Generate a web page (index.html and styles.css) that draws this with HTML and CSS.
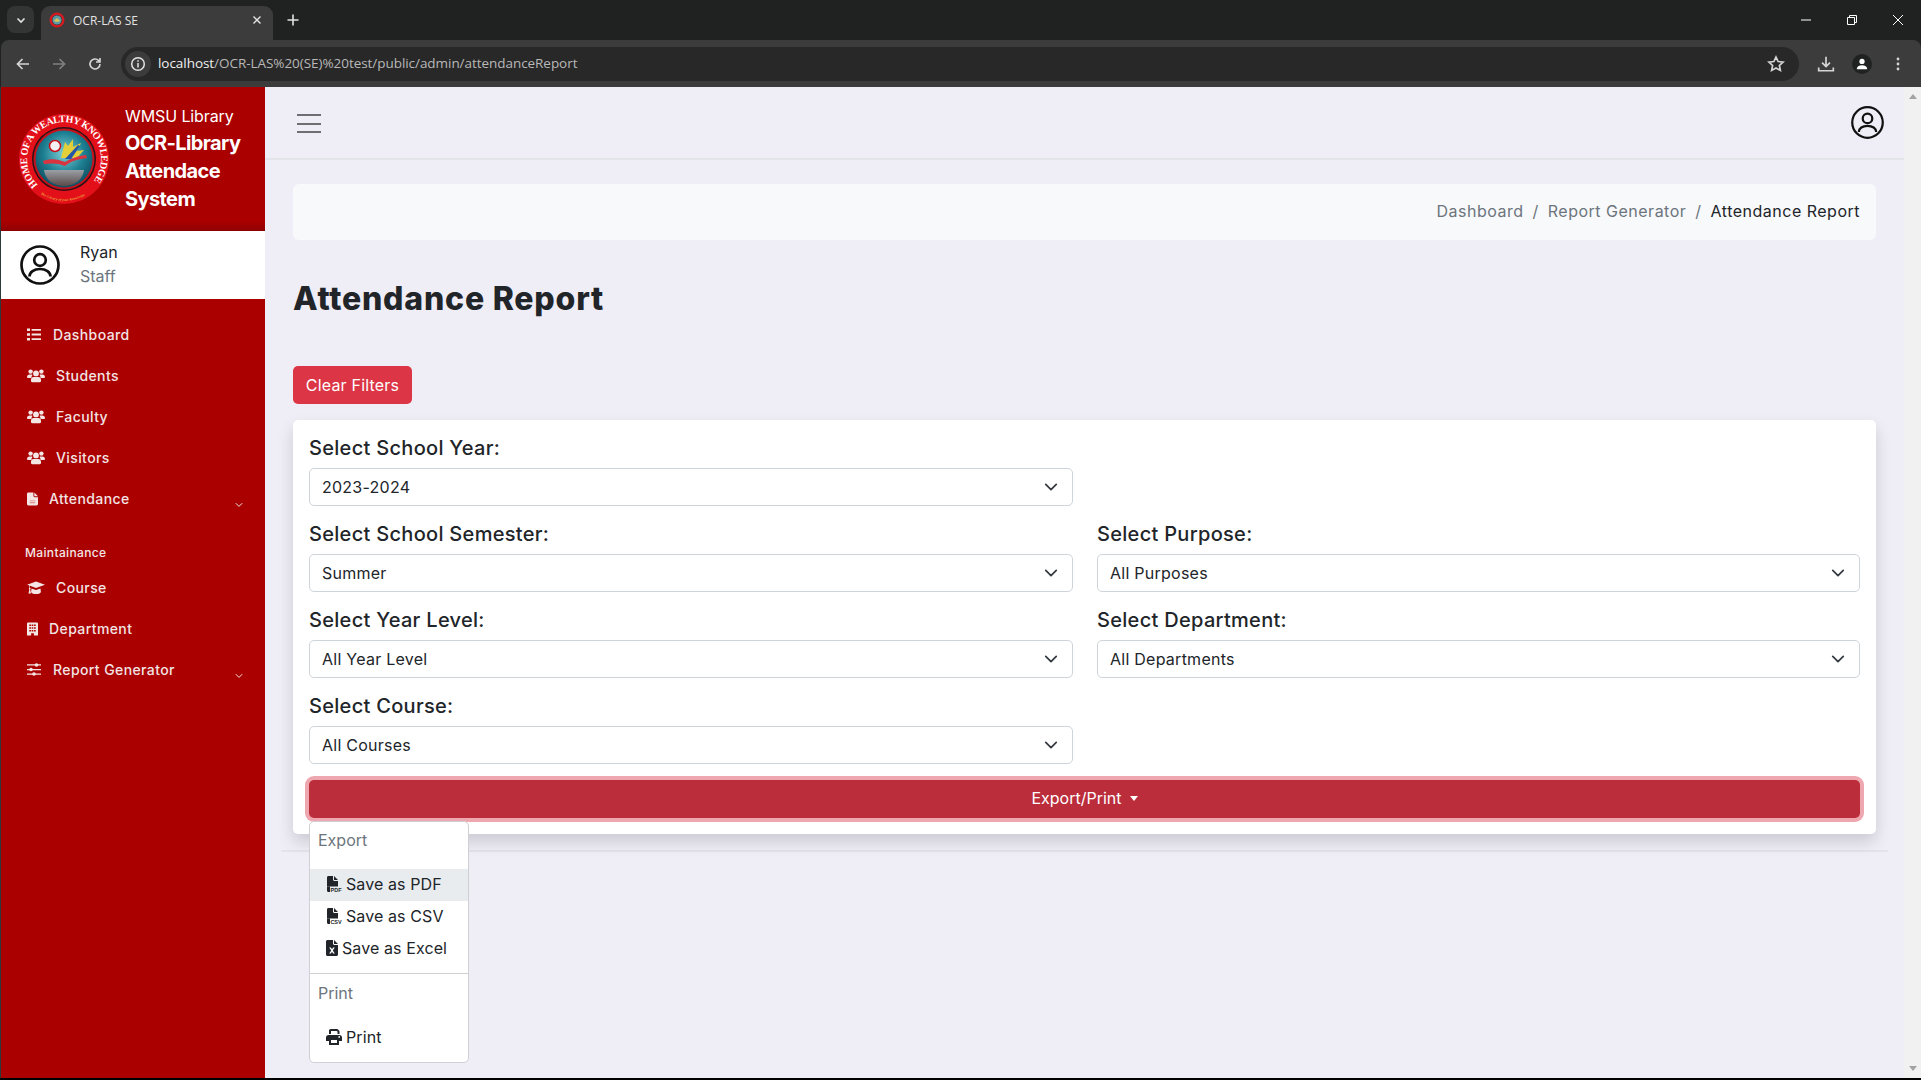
FILE: index.html
```html
<!DOCTYPE html>
<html lang="en">
  <head>
    <meta charset="UTF-8" />
    <title>OCR-LAS SE</title>
    <link rel="stylesheet" href="styles.css">
  </head>

  <body>
    <!-- shared icons -->
    <svg class="defs" width="0" height="0">
      <defs>
        <symbol id="i-person" viewBox="0 0 40 40">
          <g fill="none" stroke="currentColor" stroke-width="2.700">
            <circle cx="20" cy="20" r="18.500"/>
            <circle cx="20" cy="15" r="5.800"/>
            <path d="M9.500 31.500c0-4.500 4.500-7.500 10.500-7.500s10.500 3 10.500 7.500"/>
          </g>
        </symbol>
        <symbol id="i-users" viewBox="0 0 18 14">
          <circle cx="3.600" cy="2.600" r="2.200"/><circle cx="14.400" cy="2.600" r="2.200"/><circle cx="9" cy="4.400" r="2.900"/>
          <path d="M0 8.200C0 6.600 1.100 5.600 2.600 5.600h1.600c.5 0 .9.100 1.300.3-.7.800-1.100 1.800-1.100 3H.9C.4 8.900 0 8.600 0 8.200zM18 8.200c0 .4-.4.700-.9.700h-3.500c0-1.200-.4-2.200-1.100-3 .4-.2.800-.3 1.300-.3h1.600c1.500 0 2.600 1 2.600 2.600zM6.600 8h4.800c1.500 0 2.600 1.200 2.600 2.700v1.400c0 .7-.5 1.100-1.100 1.100H5.100c-.6 0-1.100-.4-1.100-1.100v-1.400C4 9.200 5.100 8 6.600 8z"/>
        </symbol>
        <symbol id="i-down" viewBox="0 0 16 16">
          <path d="m2 5 6 6 6-6" fill="none" stroke="currentColor" stroke-width="2" stroke-linecap="round" stroke-linejoin="round"/>
        </symbol>
        <symbol id="i-nav-down" viewBox="0 0 8 6">
          <path d="M.8 1.200 4 4.400l3.200-3.200" fill="none" stroke="currentColor" stroke-width="1"/>
        </symbol>
        <radialGradient id="logo-bg" cx="50%" cy="40%" r="60%">
          <stop offset="0" stop-color="#7fd0d6"/>
          <stop offset="0.6" stop-color="#1d7f92"/>
          <stop offset="1" stop-color="#0f4f62"/>
        </radialGradient>
        <linearGradient id="logo-low" x1="0" y1="0" x2="0" y2="1">
          <stop offset="0" stop-color="#9aa0a6"/>
          <stop offset="1" stop-color="#5a4a48"/>
        </linearGradient>
        <path id="logo-top" d="M16 74A41 41 0 0 1 16 16A41 41 0 0 1 74 16A41 41 0 0 1 74 74" transform="translate(45 45) scale(.9) translate(-45 -45)"/>
        <path id="logo-arc" d="M22 80A41.800 41.800 0 0 0 68 80"/>
      </defs>
    </svg>

    <!-- browser chrome -->
    <header class="chrome">
      <div class="tabstrip">
        <div class="tab-list">
          <svg class="ic-12" viewBox="0 0 12 12"><path d="M2.500 4.500 6 8l3.500-3.500" fill="none" stroke="#e3e3e3" stroke-width="1.600"/></svg>
        </div>
        <div class="tab">
          <svg class="favicon" viewBox="0 0 16 16"><circle cx="8" cy="8" r="7.500" fill="#d81920"/><circle cx="8" cy="8" r="5.200" fill="#3c3c3c"/><circle cx="8" cy="8" r="4.500" fill="#5b9aa6"/><path d="M4.500 9l3.500-3 3.500 3-3.500 1z" fill="#d8c05a"/></svg>
          <span class="tab-title">OCR-LAS SE</span>
          <svg class="ic-12" viewBox="0 0 12 12"><path d="M2.500 2.500l7 7m0-7l-7 7" stroke="#e3e3e3" stroke-width="1.400"/></svg>
        </div>
        <svg class="new-tab" viewBox="0 0 14 14"><path d="M7 1.500v11M1.500 7h11" stroke="#e3e3e3" stroke-width="1.600"/></svg>
        <div class="win-btns">
          <svg viewBox="0 0 12 12"><path d="M1 6h10" stroke="#fff"/></svg>
          <svg viewBox="0 0 12 12"><path d="M1.500 3.500h7v7h-7zM3.500 3.500V1.500h7v7h-2" fill="none" stroke="#fff"/></svg>
          <svg viewBox="0 0 12 12"><path d="M1 1l10 10M11 1L1 11" stroke="#fff"/></svg>
        </div>
      </div>
      <div class="toolbar">
        <svg class="tool" viewBox="0 0 16 16"><path d="M14 8H3m4.500-5L2.500 8l5 5" fill="none" stroke="#d5d5d5" stroke-width="1.700"/></svg>
        <svg class="tool" viewBox="0 0 16 16"><path d="M2 8h11M8.500 3l5 5-5 5" fill="none" stroke="#808080" stroke-width="1.700"/></svg>
        <svg class="tool" viewBox="0 0 16 16"><path d="M13 8a5 5 0 1 1-1.500-3.600L13 6M13 2v4H9" fill="none" stroke="#d5d5d5" stroke-width="1.600"/></svg>
        <div class="omnibox">
          <span class="site-info">
            <svg viewBox="0 0 16 16"><circle cx="8" cy="8" r="6.300" fill="none" stroke="#e3e3e3" stroke-width="1.500"/><path d="M8 7v4.500M8 4.300v1.500" stroke="#e3e3e3" stroke-width="1.500"/></svg>
          </span>
          <span class="url"><b>localhost</b>/OCR-LAS%20(SE)%20test/public/admin/attendanceReport</span>
          <svg class="star" viewBox="0 0 16 16"><path d="M8 1.800l1.900 4 4.400.5-3.300 3 .9 4.400L8 11.500l-3.900 2.200.9-4.400-3.300-3 4.400-.5z" fill="none" stroke="#d5d5d5" stroke-width="1.500"/></svg>
        </div>
        <svg class="tool tool-dl" viewBox="0 0 16 16"><path d="M8 1.500v8.500M4.500 6.700 8 10.200l3.500-3.500M1.500 11v3h13v-3" fill="none" stroke="#d5d5d5" stroke-width="1.500"/></svg>
        <span class="profile">
          <svg viewBox="0 0 16 16"><circle cx="8" cy="5" r="3" fill="#fff"/><path d="M2 14c0-3 2.500-4.700 6-4.700s6 1.700 6 4.700z" fill="#fff"/></svg>
        </span>
        <svg class="tool tool-menu" viewBox="0 0 16 16"><circle cx="8" cy="3" r="1.400" fill="#d5d5d5"/><circle cx="8" cy="8" r="1.400" fill="#d5d5d5"/><circle cx="8" cy="13" r="1.400" fill="#d5d5d5"/></svg>
      </div>
    </header>

    <div class="app">
      <!-- sidebar -->
      <aside class="sidebar">
        <div class="brand">
          <svg class="logo" viewBox="0 0 90 90">
            <circle cx="45" cy="45" r="45" fill="#e3101a"/>
            <circle cx="45" cy="45" r="32" fill="#2a1216"/>
            <circle cx="45" cy="45" r="30.500" fill="#c8101a"/>
            <circle cx="45" cy="45" r="28.500" fill="url(#logo-bg)"/>
            <circle cx="36" cy="32" r="5.500" fill="#f2f2f2" stroke="#c8101a" stroke-width="1.500"/>
            <path d="M42 44l4-16 3 4 5-7 0 8 8-4-4 8 7-1-7 8z" fill="#e2cf3a"/>
            <path d="M46 45l13-14 2 1-9 13z" fill="#2456a8"/>
            <path d="M24 47c8-3 15-2 22 1 5-3 13-6 21-7l1 3c-9 1-16 3-22 8-6-3-14-3-21-2z" fill="#d9343f"/>
            <path d="M25 56h40c-1 9-9 16-20 16s-19-7-20-16z" fill="url(#logo-low)"/>
            <text class="logo-text"><textPath href="#logo-top" textLength="168">HOME OF A WEALTHY KNOWLEDGE</textPath></text>
            <text class="logo-tag"><textPath href="#logo-arc" textLength="46">The Library of your Knowledge</textPath></text>
          </svg>
          <div class="brand-text">
            <div class="brand-org">WMSU Library</div>
            <div class="brand-name">OCR-Library Attendace System</div>
          </div>
        </div>
        <div class="user">
          <svg class="user-ic"><use href="#i-person"/></svg>
          <div>
            <div class="user-name">Ryan</div>
            <div class="user-role">Staff</div>
          </div>
        </div>

        <nav class="nav">
          <a class="nav-item" href="#">
            <svg class="ni ni-list" viewBox="0 0 14 12"><path d="M0 0h3v2.600H0zM0 4.700h3v2.600H0zM0 9.400h3V12H0zM4.600.4H14v1.800H4.600zM4.600 5.100H14v1.800H4.600zM4.600 9.800H14v1.800H4.600z"/></svg>
            Dashboard
          </a>
          <a class="nav-item" href="#"><svg class="ni ni-users"><use href="#i-users"/></svg>Students</a>
          <a class="nav-item" href="#"><svg class="ni ni-users"><use href="#i-users"/></svg>Faculty</a>
          <a class="nav-item" href="#"><svg class="ni ni-users"><use href="#i-users"/></svg>Visitors</a>
          <a class="nav-item" href="#">
            <svg class="ni ni-file" viewBox="0 0 12 14"><path d="M0 1.500C0 .7.700 0 1.500 0H7v3.500C7 4.300 7.700 5 8.500 5H12v7.500c0 .8-.7 1.500-1.500 1.500h-9C.7 14 0 13.300 0 12.500z"/><path d="M8 0l4 4H8z"/><path d="M3 8.500h6v1H3zM3 10.500h6v1H3z" fill="#d98080"/></svg>
            Attendance
            <svg class="nav-caret"><use href="#i-nav-down"/></svg>
          </a>
          <div class="nav-head">Maintainance</div>
          <a class="nav-item" href="#">
            <svg class="ni ni-users" viewBox="0 0 18 13"><path d="M9 0l9 3.200-9 3.200-6-2.100v1.900c.4.200.6.500.6.900 0 .3-.1.600-.4.800L4 12H1.500l.8-4.100C2 7.700 1.900 7.400 1.900 7.100c0-.4.200-.7.500-.9V4L0 3.200zM4.500 7l4.500 1.600L13.500 7l.4 3.200c0 1.300-2.200 2.400-4.900 2.400s-4.900-1.100-4.900-2.400z"/></svg>
            Course
          </a>
          <a class="nav-item" href="#">
            <svg class="ni ni-file" viewBox="0 0 12 14"><path fill-rule="evenodd" d="M1 0h10c.6 0 1 .4 1 1v13H7.500v-2.500h-3V14H0V1c0-.6.400-1 1-1zm1.500 2v1.800h1.800V2zm2.600 0v1.800h1.800V2zm2.600 0v1.800h1.800V2zM2.500 5v1.800h1.800V5zm2.600 0v1.800h1.800V5zm2.600 0v1.800h1.800V5zM2.500 8v1.800h1.800V8zm2.600 0v1.800h1.800V8zm2.600 0v1.800h1.800V8z"/></svg>
            Department
          </a>
          <a class="nav-item" href="#">
            <svg class="ni ni-list" viewBox="0 0 14 13"><path d="M0 1.300h14v1.300H0zM0 5.900h14v1.300H0zM0 10.500h14v1.300H0z"/><circle cx="9.500" cy="2" r="1.800"/><circle cx="4" cy="6.500" r="1.800"/><circle cx="7" cy="11" r="1.800"/></svg>
            Report Generator
            <svg class="nav-caret"><use href="#i-nav-down"/></svg>
          </a>
        </nav>
      </aside>

      <!-- main -->
      <main class="main">
        <div class="topbar">
          <div class="burger"><span></span><span></span><span></span></div>
          <svg class="top-user"><use href="#i-person"/></svg>
        </div>

        <div class="content">
          <ol class="crumbs">
            <li><a href="#">Dashboard</a></li>
            <li class="sep">/</li>
            <li><a href="#">Report Generator</a></li>
            <li class="sep">/</li>
            <li>Attendance Report</li>
          </ol>

          <h1 class="page-title">Attendance Report</h1>
          <button class="btn-clear">Clear Filters</button>

          <section class="card">
            <div class="filters">
              <div class="field">
                <label>Select School Year:</label>
                <div class="select">2023-2024<svg><use href="#i-down"/></svg></div>
              </div>
              <div></div>
              <div class="field">
                <label>Select School Semester:</label>
                <div class="select">Summer<svg><use href="#i-down"/></svg></div>
              </div>
              <div class="field">
                <label>Select Purpose:</label>
                <div class="select">All Purposes<svg><use href="#i-down"/></svg></div>
              </div>
              <div class="field">
                <label>Select Year Level:</label>
                <div class="select">All Year Level<svg><use href="#i-down"/></svg></div>
              </div>
              <div class="field">
                <label>Select Department:</label>
                <div class="select">All Departments<svg><use href="#i-down"/></svg></div>
              </div>
              <div class="field">
                <label>Select Course:</label>
                <div class="select">All Courses<svg><use href="#i-down"/></svg></div>
              </div>
            </div>

            <button class="btn-export">Export/Print<span class="caret"></span></button>

            <!-- dropdown stays open over the card -->
            <div class="menu">
              <div class="menu-head">Export</div>
              <a class="menu-item active" href="#">
                <svg class="mi" viewBox="0 0 16 16"><path d="M1 1.500C1 .7 1.600 0 2.400 0H7v3.500C7 4.300 7.700 5 8.500 5H12v5.500H1z"/><path d="M8 0l4 4H8z"/><path d="M1 10.500h3V16H2.400C1.600 16 1 15.300 1 14.500z"/><text x="4.400" y="15.800" class="mi-text" textLength="11.400">PDF</text></svg>
                Save as PDF
              </a>
              <a class="menu-item" href="#">
                <svg class="mi" viewBox="0 0 16 16"><path d="M1 1.500C1 .7 1.600 0 2.400 0H7v3.500C7 4.300 7.700 5 8.500 5H12v5.500H1z"/><path d="M8 0l4 4H8z"/><path d="M1 10.500h3V16H2.400C1.600 16 1 15.300 1 14.500z"/><text x="4.400" y="15.800" class="mi-text" textLength="11.400">CSV</text></svg>
                Save as CSV
              </a>
              <a class="menu-item" href="#">
                <svg class="mi mi-x" viewBox="0 0 12 16"><path fill-rule="evenodd" d="M0 1.500C0 .7.700 0 1.500 0H7v3.500C7 4.300 7.700 5 8.500 5H12v9.500c0 .8-.7 1.500-1.500 1.500h-9C.7 16 0 15.300 0 14.500zM3.200 7.500l2 3-2 3h1.700L6 11.800l1.100 1.700h1.700l-2-3 2-3H7.100L6 9.200 4.900 7.500z"/><path d="M8 0l4 4H8z"/></svg>
                Save as Excel
              </a>
              <hr class="menu-line">
              <div class="menu-head">Print</div>
              <a class="menu-item" href="#">
                <svg class="mi" viewBox="0 0 16 16"><path d="M3 5V1.800C3 .8 3.800 0 4.800 0h6.100c.5 0 .9.200 1.200.5l.9.900c.3.300.5.700.5 1.200V5h-2V2.500L10.500 2H5v3zM2.500 6h11C14.900 6 16 7.100 16 8.500V12h-3v4H3v-4H0V8.500C0 7.100 1.100 6 2.500 6zM5 11v3h6v-3zm8.200-2.200a.9.900 0 1 0 0-1.800.9.900 0 0 0 0 1.800z" fill-rule="evenodd"/></svg>
                Print
              </a>
            </div>
          </section>

          <hr class="rule">
        </div>
      </main>

      <div class="scrollbar">
        <span class="arrow-up"></span>
        <span class="arrow-down"></span>
      </div>
    </div>
    <div class="bottom-line"></div>
  </body>
</html>
```

FILE: styles.css
```css
* {
  box-sizing: border-box;
}

html,
body {
  margin: 0;
  height: 1080px;
  overflow: hidden;
}

body {
  font-family: Inter, "Liberation Sans", sans-serif;
  font-size: 16px;
  color: #212529;
  background: #000;
  display: flex;
  flex-direction: column;
}

a {
  color: inherit;
  text-decoration: none;
}

.defs {
  position: absolute;
}

/* browser chrome */
.chrome {
  height: 87px;
  flex: none;
  background: #202222;
}

.tabstrip {
  height: 40px;
  display: flex;
  align-items: flex-end;
  padding-left: 7px;
}

.tab-list {
  width: 27px;
  height: 27px;
  margin-bottom: 7px;
  border-radius: 8px;
  background: #333535;
  display: flex;
  align-items: center;
  justify-content: center;
}

.ic-12 {
  width: 12px;
  height: 12px;
  flex: none;
}

.tab {
  width: 232px;
  height: 34px;
  margin-left: 7px;
  padding: 0 10px 6px 8px;
  border-radius: 9px 9px 0 0;
  background: #3c3c3c;
  display: flex;
  align-items: center;
}

.favicon {
  width: 16px;
  height: 16px;
  flex: none;
}

.tab-title {
  flex: 1;
  margin-left: 8px;
  font: 12px "Open Sans", sans-serif;
  color: #e3e3e3;
}

.new-tab {
  width: 14px;
  height: 14px;
  margin: 0 0 13px 13px;
}

.win-btns {
  margin-left: auto;
  margin-bottom: 14px;
  padding-right: 17px;
  display: flex;
  gap: 34px;
}

.win-btns svg {
  width: 12px;
  height: 12px;
}

.toolbar {
  height: 47px;
  margin-left: 1px;
  padding-left: 14px;
  border-radius: 8px 8px 0 0;
  background: #3c3c3c;
  display: flex;
  align-items: center;
}

.tool {
  width: 16px;
  height: 16px;
  flex: none;
  margin-right: 20px;
}

.omnibox {
  width: 1678px;
  height: 34px;
  margin-left: -2px;
  padding: 0 14px 0 4px;
  border-radius: 17px;
  background: #282828;
  display: flex;
  align-items: center;
}

.site-info {
  width: 26px;
  height: 26px;
  border-radius: 50%;
  background: #3c3c3c;
  display: flex;
  align-items: center;
  justify-content: center;
}

.site-info svg {
  width: 16px;
  height: 16px;
}

.url {
  flex: 1;
  margin: -2px 0 0 7px;
  font: 13.5px "Open Sans", sans-serif;
  letter-spacing: -0.05px;
  color: #b8b8b8;
}

.url b {
  font-weight: 400;
  color: #f0f0f0;
}

.star {
  width: 18px;
  height: 18px;
}

.tool-dl {
  width: 18px;
  height: 18px;
  margin: 0 0 0 18px;
}

.profile {
  width: 20px;
  height: 20px;
  margin-left: 17px;
  border-radius: 50%;
  background: #202222;
  display: flex;
  align-items: center;
  justify-content: center;
}

.profile svg {
  width: 14px;
  height: 14px;
}

.tool-menu {
  margin: 0 0 0 18px;
}

/* page */
.app {
  flex: 1;
  min-height: 0;
  padding-left: 1px;
  background: #2c3a3a;
  display: flex;
}

.sidebar {
  width: 264px;
  flex: none;
  background: #aa0000;
  color: #fff;
}

.brand {
  height: 144px;
  padding: 27px 0 0 18px;
  display: flex;
  background: linear-gradient(#aa0000 134px, #8f0000);
}

.logo {
  width: 90px;
  height: 90px;
  flex: none;
}

.logo-text {
  font: 700 10px "Liberation Serif", serif;
  fill: #fff;
}

.logo-tag {
  font: italic 3.200px "Liberation Serif", serif;
  fill: #f3e24a;
}

.brand-text {
  margin: -10px 0 0 16px;
  width: 126px;
}

.brand-org {
  font-size: 16px;
  line-height: 24px;
  letter-spacing: -0.1px;
}

.brand-name {
  margin-top: 1px;
  font-size: 20px;
  font-weight: 700;
  line-height: 28px;
  letter-spacing: -0.6px;
}

.user {
  height: 68px;
  padding: 0 0 2px 19px;
  background: #fff;
  color: #212529;
  display: flex;
  align-items: center;
  gap: 20px;
  line-height: 24px;
}

.user-ic {
  width: 40px;
  height: 40px;
  margin-top: 2px;
  color: #111;
}

.user-role {
  color: #6c757d;
}

.nav {
  padding-top: 15px;
  display: flex;
  flex-direction: column;
}

.nav-item {
  height: 41px;
  padding-left: 26px;
  font-size: 14px;
  font-weight: 500;
  letter-spacing: 0.4px;
  color: #f2e4e4;
  display: flex;
  align-items: center;
  gap: 12px;
  position: relative;
}

.ni {
  flex: none;
  fill: #f5e6e6;
}

.ni-list {
  width: 14px;
  height: 13px;
}

.ni-users {
  width: 18px;
  height: 14px;
  margin-right: -1px;
}

.ni-file {
  width: 11px;
  height: 14px;
  margin-right: -1px;
}

.nav-caret {
  position: absolute;
  left: 234px;
  top: 24px;
  width: 8px;
  height: 6px;
  color: #f2e4e4;
}

.nav-head {
  margin: 24px 0 4px;
  height: 20px;
  padding-left: 24px;
  font-size: 12px;
  font-weight: 500;
  line-height: 20px;
  letter-spacing: 0.35px;
  color: #f5e6e6;
}

.main {
  flex: 1;
  min-width: 0;
  background: #efeef7;
}

.topbar {
  height: 73px;
  padding: 0 20px 0 32px;
  border-bottom: 2px solid #e3e3ea;
  display: flex;
  align-items: center;
  justify-content: space-between;
}

.burger {
  width: 24px;
  margin-top: 2px;
  display: flex;
  flex-direction: column;
  gap: 6.500px;
}

.burger span {
  height: 2px;
  background: #6e6e73;
}

.top-user {
  width: 33px;
  height: 33px;
  color: #111;
}

.content {
  padding: 24px 28px 0;
}

.crumbs {
  height: 56px;
  margin: 0;
  padding: 0 16px 2px;
  list-style: none;
  border-radius: 6px;
  background: #f8f9fb;
  display: flex;
  align-items: center;
  justify-content: flex-end;
  gap: 9px;
  letter-spacing: 0.5px;
}

.crumbs a,
.crumbs .sep {
  color: #6c757d;
}

.page-title {
  margin: 40px 0 48px;
  font-size: 32px;
  font-weight: 800;
  line-height: 38px;
  letter-spacing: 0.8px;
}

.btn-clear {
  height: 38px;
  width: 119px;
  display: block;
  padding: 0 0 1px;
  border: 0;
  border-radius: 5px;
  background: #dc3545;
  color: #fff;
  font: inherit;
  letter-spacing: 0.2px;
}

.card {
  margin-top: 16px;
  padding: 16px;
  border-radius: 5px;
  background: #fff;
  box-shadow: 0 8px 16px rgba(0, 0, 0, 0.15);
  position: relative;
}

.filters {
  display: grid;
  grid-template-columns: 764px 763px;
  column-gap: 24px;
  row-gap: 16px;
}

.field label {
  display: block;
  margin-bottom: 8px;
  font-size: 20px;
  font-weight: 500;
  line-height: 24px;
  letter-spacing: 0.3px;
}

.select {
  height: 38px;
  padding: 0 14px 1px 12px;
  border: 1px solid #ced4da;
  border-radius: 5px;
  display: flex;
  align-items: center;
  justify-content: space-between;
  letter-spacing: 0.25px;
}

.select svg {
  width: 14px;
  height: 14px;
  color: #343a40;
}

.btn-export {
  display: block;
  width: 100%;
  height: 38px;
  margin-top: 16px;
  padding: 0 0 2px;
  border: 0;
  border-radius: 5px;
  background: #bb2d3b;
  box-shadow: 0 0 0 4px #eea7ae;
  color: #fff;
  font: inherit;
}

.caret {
  display: inline-block;
  margin-left: 8px;
  vertical-align: 3px;
  border-top: 5px solid #fff;
  border-left: 4.500px solid transparent;
  border-right: 4.500px solid transparent;
}

.menu {
  position: absolute;
  left: 16px;
  top: 401px;
  width: 160px;
  height: 242px;
  padding-top: 7px;
  border: 1px solid #cfcfd4;
  border-radius: 5px;
  background: #fff;
  z-index: 2;
}

.menu-head {
  height: 40px;
  padding: 0 8px;
  line-height: 23px;
  color: #6c757d;
}

.menu-item {
  height: 32px;
  padding: 0 0 2px 16px;
  display: flex;
  align-items: center;
  gap: 4px;
  letter-spacing: 0.1px;
}

.menu-item.active {
  background: #e9ecef;
}

.mi {
  width: 16px;
  height: 16px;
  flex: none;
  fill: #212529;
}

.mi-x {
  width: 12px;
}

.mi-text {
  font: 700 5.500px "Liberation Sans", sans-serif;
}

.menu-line {
  margin: 8px 0;
  border: 0;
  border-top: 1px solid #cfcfd4;
}

.rule {
  margin: 16px -12px 0;
  border: 0;
  border-top: 2px solid #e3e3ea;
}

.scrollbar {
  width: 17px;
  flex: none;
  background: #f1f1f1;
  padding: 7px 0;
  display: flex;
  flex-direction: column;
  justify-content: space-between;
  align-items: center;
}

.arrow-up {
  border-bottom: 5px solid #a3a3a3;
  border-left: 4px solid transparent;
  border-right: 4px solid transparent;
}

.arrow-down {
  border-top: 5px solid #a3a3a3;
  border-left: 4px solid transparent;
  border-right: 4px solid transparent;
}

.bottom-line {
  height: 2px;
  flex: none;
  background: #000;
}
```
